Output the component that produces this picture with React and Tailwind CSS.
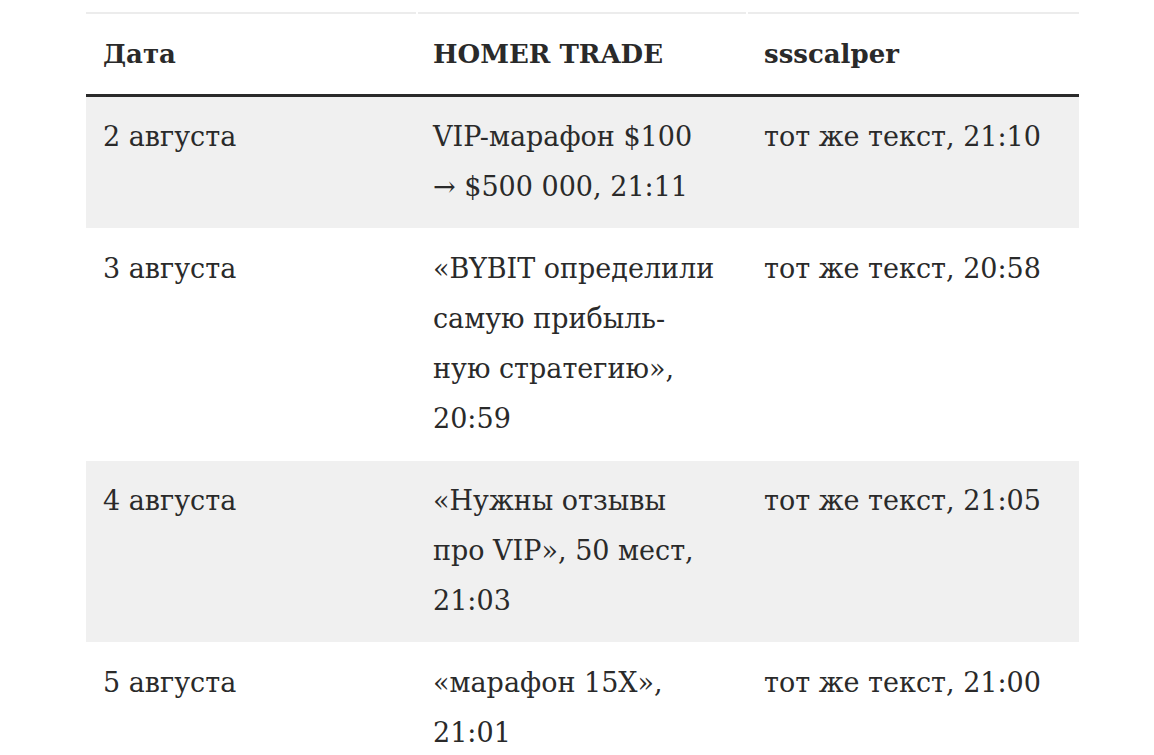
import React from "react";

const rows = [
  { d: "2 августа", h: ["VIP-марафон $100", "→ $500 000, 21:11"], s: "тот же текст, 21:10", gray: true },
  { d: "3 августа", h: ["«BYBIT определили", "самую прибыль-", "ную стратегию»,", "20:59"], s: "тот же текст, 20:58", gray: false },
  { d: "4 августа", h: ["«Нужны отзывы", "про VIP», 50 мест,", "21:03"], s: "тот же текст, 21:05", gray: true },
  { d: "5 августа", h: ["«марафон 15X»,", "21:01"], s: "тот же текст, 21:00", gray: false },
];

const thBase =
  "border-b-[3px] border-b-[#2a2a2a] pt-[17px] pb-[15px] text-left font-bold text-[26px] bg-[linear-gradient(#ececec,#ececec)] bg-no-repeat";

export default function App() {
  return (
    <div
      className="min-h-[755px] bg-white pl-[86px] pt-[12px] text-[#2a2a2a]"
      style={{ fontFamily: '"DejaVu Serif", "Liberation Serif", serif' }}
    >
      <table className="w-[993px] table-fixed border-separate border-spacing-0 text-[27px] leading-[50px]">
        <colgroup>
          <col className="w-[330px]" />
          <col className="w-[330px]" />
          <col className="w-[333px]" />
        </colgroup>
        <thead>
          <tr>
            <th className={`${thBase} px-[17px] bg-[length:100%_2px] bg-[position:0_0]`}>Дата</th>
            <th className={`${thBase} px-[17px] bg-[length:calc(100%-2px)_2px] bg-[position:2px_0]`}>HOMER TRADE</th>
            <th className={`${thBase} px-[18px] bg-[length:calc(100%-2px)_2px] bg-[position:2px_0]`}>ssscalper</th>
          </tr>
        </thead>
        <tbody>
          {rows.map((r, i) => (
            <tr key={i} className={r.gray ? "bg-[#f0f0f0]" : "bg-white"}>
              <td className="border-b border-white px-[17px] pt-[15px] pb-4 align-top whitespace-nowrap">
                {r.d}
              </td>
              <td className="border-b border-white px-[17px] pt-[15px] pb-4 align-top whitespace-nowrap">
                {r.h.map((line, j) => (
                  <React.Fragment key={j}>
                    {line}
                    {j < r.h.length - 1 && <br />}
                  </React.Fragment>
                ))}
              </td>
              <td className="border-b border-white px-[18px] pt-[15px] pb-4 align-top whitespace-nowrap">
                {r.s}
              </td>
            </tr>
          ))}
        </tbody>
      </table>
    </div>
  );
}
